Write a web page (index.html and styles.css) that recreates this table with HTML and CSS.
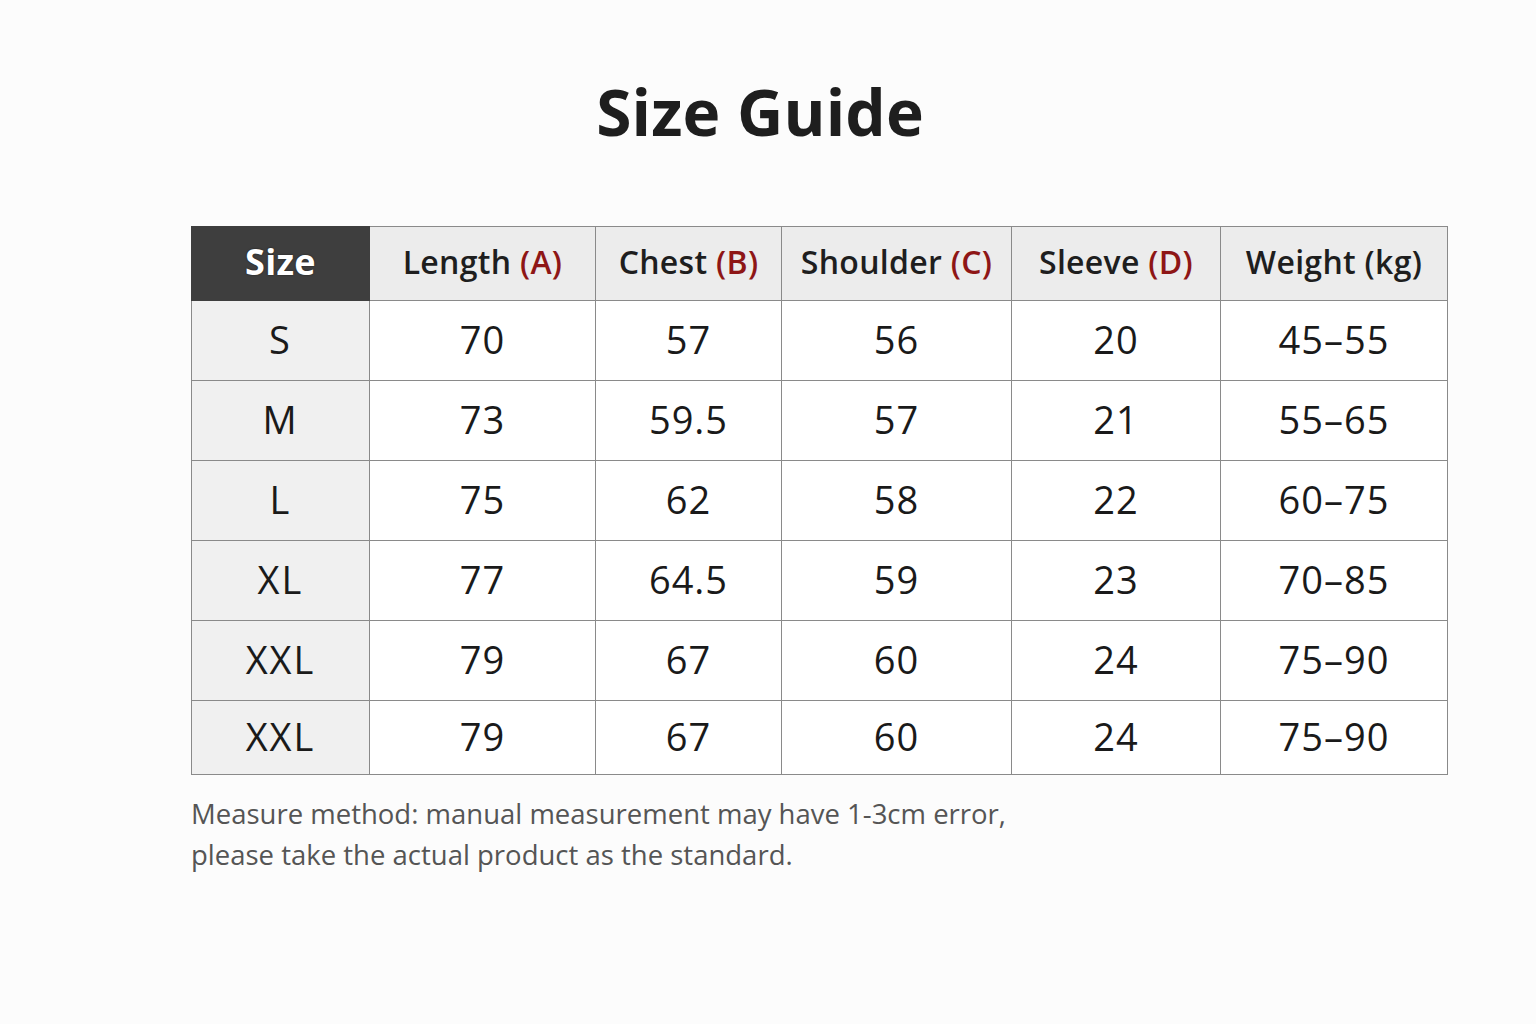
FILE: index.html
```html
<!DOCTYPE html>
<html>
<head>
<meta charset="utf-8">
<link rel="stylesheet" href="styles.css">
</head>
<body>
<div class="page">
  <h1 class="title">Size Guide</h1>
  <table class="sizes">
    <colgroup>
      <col class="c1"><col class="c2"><col class="c3"><col class="c4"><col class="c5"><col class="c6">
    </colgroup>
    <thead>
      <tr>
        <th class="corner">Size</th>
        <th>Length <span class="red">(A)</span></th>
        <th>Chest <span class="red">(B)</span></th>
        <th>Shoulder <span class="red">(C)</span></th>
        <th>Sleeve <span class="red">(D)</span></th>
        <th>Weight (kg)</th>
      </tr>
    </thead>
    <tbody>
      <tr><td class="size">S</td><td>70</td><td>57</td><td>56</td><td>20</td><td>45–55</td></tr>
      <tr><td class="size">M</td><td>73</td><td>59.5</td><td>57</td><td>21</td><td>55–65</td></tr>
      <tr><td class="size">L</td><td>75</td><td>62</td><td>58</td><td>22</td><td>60–75</td></tr>
      <tr><td class="size">XL</td><td>77</td><td>64.5</td><td>59</td><td>23</td><td>70–85</td></tr>
      <tr><td class="size">XXL</td><td>79</td><td>67</td><td>60</td><td>24</td><td>75–90</td></tr>
      <tr class="last"><td class="size">XXL</td><td>79</td><td>67</td><td>60</td><td>24</td><td>75–90</td></tr>
    </tbody>
  </table>
  <p class="note">Measure method: manual measurement may have 1-3cm error,<br>please take the actual product as the standard.</p>
</div>
</body>
</html>
```
FILE: styles.css
```css
html, body {
  margin: 0;
  padding: 0;
}
body {
  background: #fcfcfc;
  font-family: "Open Sans", "Noto Sans", sans-serif;
  color: #1c1c1c;
  width: 1536px;
  height: 1024px;
  overflow: hidden;
}
.page {
  padding: 68px 89px 0 191px;
}
.title {
  margin: 0;
  width: 1138px;
  text-align: center;
  font-size: 64px;
  font-weight: 700;
  line-height: 88px;
  color: #1e1e1e;
  letter-spacing: 0.1px;
}
.sizes {
  margin-top: 70px;
  border-collapse: collapse;
  table-layout: fixed;
  width: 1257px;
}
.c1 { width: 178px; }
.c2 { width: 226px; }
.c3 { width: 186px; }
.c4 { width: 230px; }
.c5 { width: 209px; }
.c6 { width: 227px; }
.sizes th, .sizes td {
  border: 1px solid #8a8a8a;
  text-align: center;
  padding: 0 0 4px 0;
}
.sizes th {
  height: 69px;
  background: #ececec;
  font-size: 32px;
  font-weight: 600;
  color: #1e1e1e;
  letter-spacing: 0.3px;
}
.sizes th.corner {
  background: #3e3e3e;
  color: #ffffff;
  font-weight: 700;
  font-size: 36px;
  border-color: #3e3e3e;
  text-shadow: 0 0 2px rgba(0, 0, 0, 0.6);
}
.red {
  color: #8e1616;
  font-weight: 600;
}
.sizes td {
  height: 75px;
  background: #ffffff;
  font-size: 38px;
  color: #1a1a1a;
  letter-spacing: 1px;
}
.sizes td.size {
  background: #f0f0f0;
  letter-spacing: 2px;
}
.sizes tr.last td {
  height: 69px;
}
.note {
  margin: 18px 0 0 0;
  font-size: 27.5px;
  line-height: 41px;
  color: #555555;
  letter-spacing: 0;
}
```
